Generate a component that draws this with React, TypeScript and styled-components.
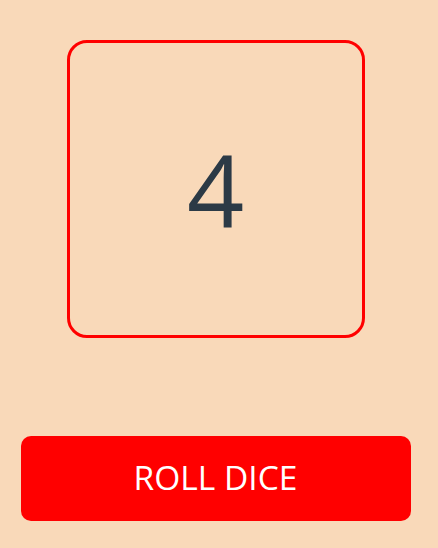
import React, { FC, useState } from 'react';
import styled, { createGlobalStyle } from 'styled-components';

const GlobalStyle = createGlobalStyle`
  html, body {
    margin: 0;
    padding: 0;
    background: #f9d9b9;
  }
  body {
    font-family: 'Open Sans', 'Noto Sans', sans-serif;
  }
`;

const Page = styled.div`
  width: 431px;
  min-height: 548px;
  padding-top: 40px;
  box-sizing: border-box;
  display: flex;
  flex-direction: column;
  align-items: center;
`;

const DiceBox = styled.div`
  width: 298px;
  height: 298px;
  box-sizing: border-box;
  border: 3px solid #ff0000;
  border-radius: 20px;
  display: flex;
  align-items: center;
  justify-content: center;
`;

const DiceValue = styled.span`
  font-size: 100px;
  line-height: 1;
  color: #2c3a46;
  font-weight: 400;
`;

const RollButton = styled.button`
  margin-top: 98px;
  width: 390px;
  height: 85px;
  border: none;
  border-radius: 10px;
  background: #ff0000;
  color: #ffffff;
  font-family: 'Open Sans', 'Noto Sans', sans-serif;
  font-size: 33.5px;
  padding: 0 0 3px;
  cursor: pointer;
`;

const App: FC = () => {
  const [value, setValue] = useState(4);

  return (
    <>
      <GlobalStyle />
      <Page>
        <DiceBox>
          <DiceValue>{value}</DiceValue>
        </DiceBox>
        <RollButton onClick={() => setValue(Math.floor(Math.random() * 6) + 1)}>ROLL DICE</RollButton>
      </Page>
    </>
  );
};

export default App;
